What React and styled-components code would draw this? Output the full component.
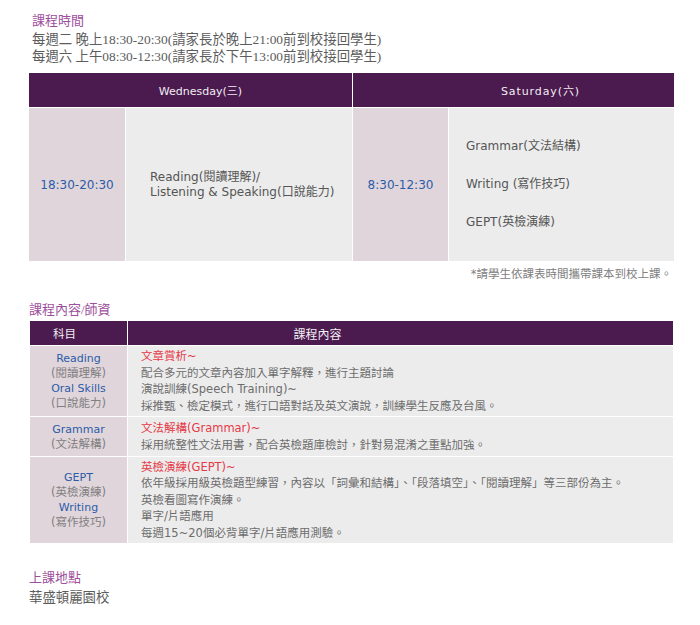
import { styled, createGlobalStyle } from 'styled-components';

const GlobalStyle = createGlobalStyle`
  body {
    margin: 0;
    background: #fff;
    font-family: 'DejaVu Sans', 'Noto Sans CJK TC', sans-serif;
  }
`;

const StyledPage = styled.div`
  width: 645px;
  padding: 12px 26px 0 29px;
`;

const StyledIntro = styled.div`
  padding-left: 3px;
  margin-bottom: 8px;
`;

const StyledSectionTitle = styled.p`
  margin: 0;
  color: #9d4f9b;
  font-family: 'Liberation Serif', 'Noto Sans CJK TC', serif;
  font-size: 13px;
  line-height: 17px;
`;

const StyledIntroTitle = styled(StyledSectionTitle)`
  margin-bottom: 2px;
`;

const StyledLead = styled.p`
  margin: 0;
  color: #5c5c5c;
  font-family: 'Liberation Serif', 'Noto Sans CJK TC', serif;
  font-size: 13.4px;
  line-height: 17px;
`;

const StyledSchedule = styled.div`
  display: grid;
  grid-template-columns: 96px 226px 95px 225px;
  grid-template-rows: 34px 153px;
  gap: 1px;
`;

// header labels sit a little off the column centre in the original page
const StyledHeadCell = styled.div`
  grid-column: span ${(p) => p.$span || 1};
  background: #4b1a4f;
  color: #f2eef2;
  font-size: ${(p) => p.$size || 11}px;
  letter-spacing: ${(p) => p.$spacing || 0}px;
  padding: ${(p) =>
    p.$shift > 0 ? `0 0 0 ${p.$shift * 2}px` : `0 ${-(p.$shift || 0) * 2}px 0 0`};
  display: flex;
  align-items: center;
  justify-content: center;
`;

const StyledTimeCell = styled.div`
  background: #e0d5db;
  color: #2b5ca8;
  font-size: 12px;
  display: flex;
  align-items: center;
  justify-content: center;
`;

const StyledClassCell = styled.div`
  background: #ececec;
  color: #555;
  font-size: 12px;
  line-height: ${(p) => p.$lh}px;
  padding-left: ${(p) => p.$pad}px;
  display: flex;
  flex-direction: column;
  justify-content: center;
`;

const StyledNote = styled.p`
  margin: 6px 2px 20px 0;
  text-align: right;
  color: #808080;
  font-size: 11.5px;
  line-height: 14px;
`;

const StyledSubjectTitle = styled(StyledSectionTitle)`
  margin-bottom: 3px;
`;

const StyledCourseTable = styled.div`
  display: grid;
  grid-template-columns: 97px 545px;
  grid-template-rows: 24px 70px 39px 86px;
  gap: 1px;
  margin-left: 1px;
`;

const StyledSubjectCell = styled.div`
  background: #e0d5db;
  line-height: 15px;
  text-align: center;
  display: flex;
  flex-direction: column;
  justify-content: center;
`;

const StyledSubjectName = styled.span`
  color: #2b5ca8;
  font-size: 11px;
`;

const StyledSubjectNote = styled.span`
  color: #808080;
  font-size: 11.5px;
`;

const StyledContentCell = styled.div`
  background: #ececec;
  color: #6c6c6c;
  font-size: 11.5px;
  line-height: 16.5px;
  padding-left: 13px;
  display: flex;
  flex-direction: column;
  justify-content: center;
`;

const StyledContentHead = styled.span`
  color: #e63a48;
`;

const StyledPlace = styled.div`
  margin-top: 26px;
`;

const StyledPlaceTitle = styled(StyledSectionTitle)`
  line-height: 18px;
  margin-bottom: 2px;
`;

const courses = [
  {
    subjects: [
      ['Reading', '(閱讀理解)'],
      ['Oral Skills', '(口說能力)'],
    ],
    head: '文章賞析~',
    lines: [
      '配合多元的文章內容加入單字解釋，進行主題討論',
      '演說訓練(Speech Training)~',
      '採推甄、檢定模式，進行口語對話及英文演說，訓練學生反應及台風。',
    ],
  },
  {
    subjects: [['Grammar', '(文法解構)']],
    head: '文法解構(Grammar)~',
    lines: ['採用統整性文法用書，配合英檢題庫檢討，針對易混淆之重點加強。'],
  },
  {
    subjects: [
      ['GEPT', '(英檢演練)'],
      ['Writing', '(寫作技巧)'],
    ],
    head: '英檢演練(GEPT)~',
    lines: [
      '依年級採用級英檢題型練習，內容以「詞彙和結構」、「段落填空」、「閱讀理解」等三部份為主。',
      '英檢看圖寫作演練。',
      '單字/片語應用',
      '每週15~20個必背單字/片語應用測驗。',
    ],
  },
];

const App = () => {
  return (
    <>
      <GlobalStyle />
      <StyledPage>
        <StyledIntro>
          <StyledIntroTitle>課程時間</StyledIntroTitle>
          <StyledLead>每週二 晚上18:30-20:30(請家長於晚上21:00前到校接回學生)</StyledLead>
          <StyledLead>每週六 上午08:30-12:30(請家長於下午13:00前到校接回學生)</StyledLead>
        </StyledIntro>

        <StyledSchedule>
          <StyledHeadCell $span={2} $shift={10}>Wednesday(三)</StyledHeadCell>
          <StyledHeadCell $span={2} $shift={27} $spacing={0.9}>Saturday(六)</StyledHeadCell>
          <StyledTimeCell>18:30-20:30</StyledTimeCell>
          <StyledClassCell $lh={15} $pad={24}>
            <span>Reading(閱讀理解)/</span>
            <span>Listening &amp; Speaking(口說能力)</span>
          </StyledClassCell>
          <StyledTimeCell>8:30-12:30</StyledTimeCell>
          <StyledClassCell $lh={19} $pad={17}>
            <span>Grammar(文法結構)</span>
            <br />
            <span>Writing (寫作技巧)</span>
            <br />
            <span>GEPT(英檢演練)</span>
          </StyledClassCell>
        </StyledSchedule>
        <StyledNote>*請學生依課表時間攜帶課本到校上課。</StyledNote>

        <StyledSubjectTitle>課程內容/師資</StyledSubjectTitle>
        <StyledCourseTable>
          <StyledHeadCell $size={11.5} $shift={-14}>科目</StyledHeadCell>
          <StyledHeadCell $size={12} $shift={-83}>課程內容</StyledHeadCell>
          {courses.map((course, i) => [
            <StyledSubjectCell key={`s${i}`}>
              {course.subjects.map(([name, note]) => [
                <StyledSubjectName key={name}>{name}</StyledSubjectName>,
                <StyledSubjectNote key={note}>{note}</StyledSubjectNote>,
              ])}
            </StyledSubjectCell>,
            <StyledContentCell key={`c${i}`}>
              <StyledContentHead>{course.head}</StyledContentHead>
              {course.lines.map((line) => (
                <span key={line}>{line}</span>
              ))}
            </StyledContentCell>,
          ])}
        </StyledCourseTable>

        <StyledPlace>
          <StyledPlaceTitle>上課地點</StyledPlaceTitle>
          <StyledLead>華盛頓麗園校</StyledLead>
        </StyledPlace>
      </StyledPage>
    </>
  );
};

export default App;
